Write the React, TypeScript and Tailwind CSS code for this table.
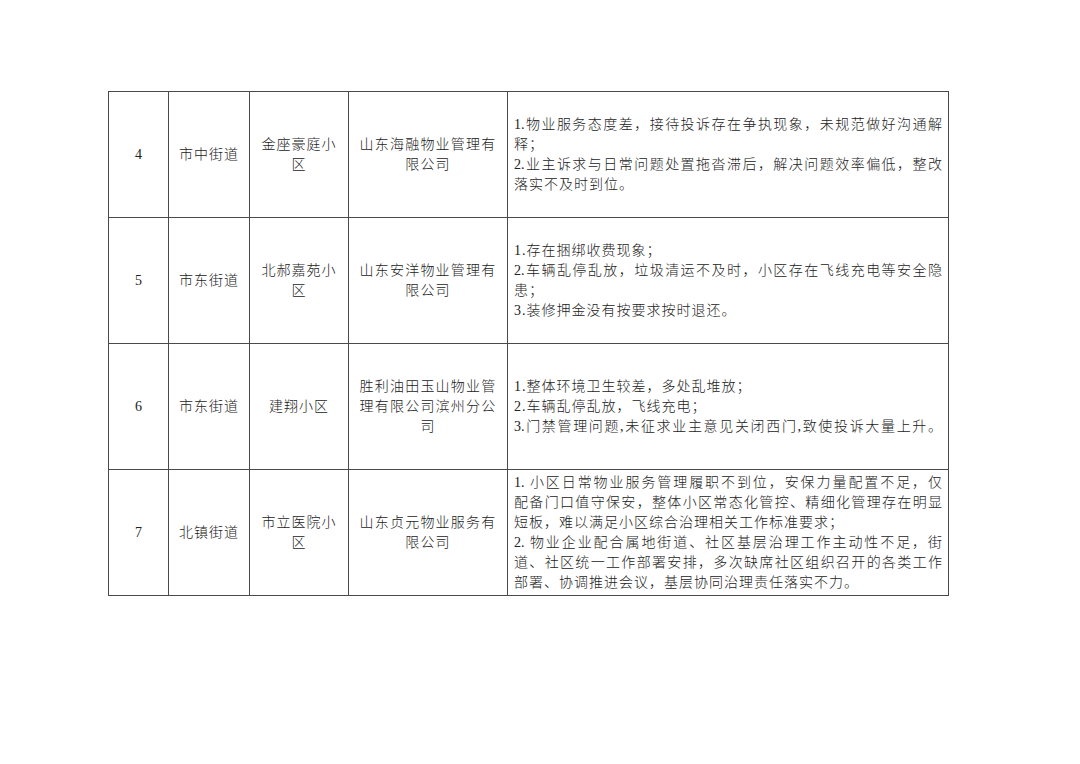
import React from "react"

type Line = { text: string; justify?: boolean }

type Row = {
  no: string
  street: string
  estate: string[]
  company: string[]
  issues: Line[]
}

const rows: Row[] = [
  {
    no: "4",
    street: "市中街道",
    estate: ["金座豪庭小", "区"],
    company: ["山东海融物业管理有", "限公司"],
    issues: [
      { text: "1.物业服务态度差，接待投诉存在争执现象，未规范做好沟通解", justify: true },
      { text: "释；" },
      { text: "2.业主诉求与日常问题处置拖沓滞后，解决问题效率偏低，整改", justify: true },
      { text: "落实不及时到位。" },
    ],
  },
  {
    no: "5",
    street: "市东街道",
    estate: ["北郝嘉苑小", "区"],
    company: ["山东安洋物业管理有", "限公司"],
    issues: [
      { text: "1.存在捆绑收费现象；" },
      { text: "2.车辆乱停乱放，垃圾清运不及时，小区存在飞线充电等安全隐", justify: true },
      { text: "患；" },
      { text: "3.装修押金没有按要求按时退还。" },
    ],
  },
  {
    no: "6",
    street: "市东街道",
    estate: ["建翔小区"],
    company: ["胜利油田玉山物业管", "理有限公司滨州分公", "司"],
    issues: [
      { text: "1.整体环境卫生较差，多处乱堆放；" },
      { text: "2.车辆乱停乱放，飞线充电；" },
      { text: "3.门禁管理问题,未征求业主意见关闭西门,致使投诉大量上升。", justify: true },
    ],
  },
  {
    no: "7",
    street: "北镇街道",
    estate: ["市立医院小", "区"],
    company: ["山东贞元物业服务有", "限公司"],
    issues: [
      { text: "1. 小区日常物业服务管理履职不到位，安保力量配置不足，仅", justify: true },
      { text: "配备门口值守保安，整体小区常态化管控、精细化管理存在明显", justify: true },
      { text: "短板，难以满足小区综合治理相关工作标准要求；" },
      { text: "2. 物业企业配合属地街道、社区基层治理工作主动性不足，街", justify: true },
      { text: "道、社区统一工作部署安排，多次缺席社区组织召开的各类工作", justify: true },
      { text: "部署、协调推进会议，基层协同治理责任落实不力。" },
    ],
  },
]

const cell = "border-r border-b border-[#4a4a4a] flex flex-col items-center justify-center text-center"

export default function App() {
  return (
    <div
      className="w-[1080px] h-[764px] bg-white pt-[91px] pl-[108px] text-[#222] text-[14px] leading-[20px]"
      style={{ fontFamily: '"Liberation Serif", "Noto Sans CJK SC", serif' }}
    >
      <div className="grid w-[841px] grid-cols-[60px_81px_99px_159px_441px] auto-rows-[126px] border-l border-t border-[#4a4a4a] font-light">
        {rows.map(r => (
          <React.Fragment key={r.no}>
            <div className={cell}>{r.no}</div>
            <div className={`${cell} tracking-[1px]`}>{r.street}</div>
            <div className={`${cell} tracking-[1px]`}>
              {r.estate.map(t => <div key={t}>{t}</div>)}
            </div>
            <div className={`${cell} tracking-[1.2px]`}>
              {r.company.map(t => <div key={t}>{t}</div>)}
            </div>
            <div className="border-r border-b border-[#4a4a4a] flex flex-col justify-center pl-[6px] pr-[6px] tracking-[1px]">
              {r.issues.map(l => (
                <div
                  key={l.text}
                  className={l.justify ? "text-justify [text-align-last:justify] whitespace-nowrap tracking-normal" : "whitespace-nowrap"}
                >
                  {l.text}
                </div>
              ))}
            </div>
          </React.Fragment>
        ))}
      </div>
    </div>
  )
}
